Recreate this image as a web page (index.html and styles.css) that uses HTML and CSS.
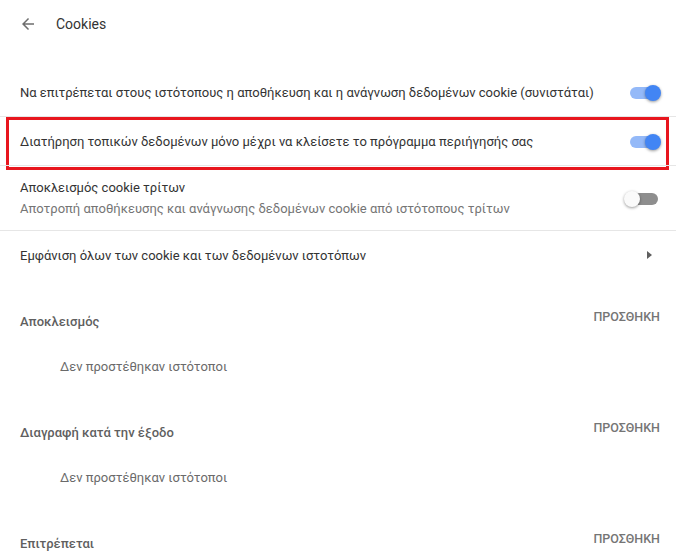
FILE: index.html
```html
<!DOCTYPE html>
<html lang="el">
<head>
  <meta charset="UTF-8" />
  <meta name="viewport" content="width=device-width, initial-scale=1.0" />
  <title>Cookies</title>
  <link rel="stylesheet" href="styles.css">
</head>
<body>
  <div class="page">
    <div class="page-head">
      <svg class="back" viewBox="0 0 24 24" width="18" height="18">
        <path d="M20 11H7.83l5.59-5.59L12 4l-8 8 8 8 1.41-1.41L7.83 13H20v-2z" />
      </svg>
      <span class="page-title">Cookies</span>
    </div>

    <div class="card">
      <div class="row">
        <span class="label">Να επιτρέπεται στους ιστότοπους η αποθήκευση και η ανάγνωση δεδομένων cookie (συνιστάται)</span>
        <span class="toggle on"><span class="knob"></span></span>
      </div>

      <div class="row marked">
        <span class="label">Διατήρηση τοπικών δεδομένων μόνο μέχρι να κλείσετε το πρόγραμμα περιήγησής σας</span>
        <span class="toggle on"><span class="knob"></span></span>
        <div class="highlight"></div>
      </div>

      <div class="row two-line">
        <div class="text">
          <span class="label">Αποκλεισμός cookie τρίτων</span>
          <span class="sub">Αποτροπή αποθήκευσης και ανάγνωσης δεδομένων cookie από ιστότοπους τρίτων</span>
        </div>
        <span class="toggle"><span class="knob"></span></span>
      </div>

      <div class="row">
        <span class="label">Εμφάνιση όλων των cookie και των δεδομένων ιστοτόπων</span>
        <span class="arrow"></span>
      </div>
    </div>

    <div class="section">
      <div class="section-head">
        <span class="section-title">Αποκλεισμός</span>
        <span class="add">ΠΡΟΣΘΗΚΗ</span>
      </div>
      <div class="empty">Δεν προστέθηκαν ιστότοποι</div>
    </div>

    <div class="section">
      <div class="section-head">
        <span class="section-title">Διαγραφή κατά την έξοδο</span>
        <span class="add">ΠΡΟΣΘΗΚΗ</span>
      </div>
      <div class="empty">Δεν προστέθηκαν ιστότοποι</div>
    </div>

    <div class="section">
      <div class="section-head">
        <span class="section-title">Επιτρέπεται</span>
        <span class="add">ΠΡΟΣΘΗΚΗ</span>
      </div>
    </div>
  </div>
</body>
</html>
```

FILE: styles.css
```css
body, html {
  margin: 0;
  padding: 0;
  height: 100%;
  overflow: hidden;
  background: #fff;
  font-family: Roboto, 'Liberation Sans', Arial, sans-serif;
  font-size: 13px;
  color: #333;
}

.page {
  display: flex;
  flex-direction: column;
}

.page-head {
  height: 46px;
  display: flex;
  align-items: center;
  padding-left: 19px;
  padding-top: 1px;
}
.back {
  fill: #6e6e6e;
  margin-right: 19px;
}
.page-title {
  font-size: 14px;
  color: #333;
}

.card {
  margin-top: 21px;
  display: flex;
  flex-direction: column;
}

.row {
  position: relative;
  min-height: 48px;
  display: flex;
  align-items: center;
  justify-content: space-between;
  padding: 0 18px 0 20px;
  border-top: 1px solid #e6e6e6;
}
.row:first-child {
  border-top: none;
}
.row.two-line {
  min-height: 64px;
}

.text {
  display: flex;
  flex-direction: column;
  gap: 4px;
}
.label {
  line-height: 17px;
}
.sub {
  color: #757575;
  line-height: 17px;
}

.toggle {
  position: relative;
  width: 28px;
  height: 12px;
  border-radius: 6px;
  background: #8e8e8e;
  margin-top: 1px;
}
.toggle .knob {
  position: absolute;
  top: -2px;
  left: -6px;
  width: 16px;
  height: 16px;
  border-radius: 50%;
  background: #fafafa;
  box-shadow: 0 1px 3px rgba(0, 0, 0, 0.4);
}
.toggle.on {
  background: #94b9f8;
}
.toggle.on .knob {
  left: 15px;
  background: #4285f4;
}

.arrow {
  width: 0;
  height: 0;
  border-top: 4px solid transparent;
  border-bottom: 4px solid transparent;
  border-left: 5px solid #5f5f5f;
  margin-right: 6px;
}

.highlight {
  position: absolute;
  top: 0;
  left: 6px;
  width: 663px;
  height: 53px;
  box-sizing: border-box;
  border: 3px solid #e8161e;
  pointer-events: none;
}

.section {
  display: flex;
  flex-direction: column;
  padding-bottom: 21px;
}
.card + .section {
  margin-top: 22px;
}

.section-head {
  height: 40px;
  display: flex;
  justify-content: space-between;
  align-items: flex-start;
  padding: 0 16px 0 20px;
}
.section-title {
  padding-top: 12px;
  line-height: 18px;
  font-weight: 500;
  color: #5f5f5f;
}
.add {
  padding-top: 7px;
  line-height: 18px;
  font-weight: 500;
  font-size: 12.5px;
  color: #757575;
}

.empty {
  height: 50px;
  display: flex;
  align-items: center;
  padding-left: 60px;
  color: #6a6a6a;
}
```
